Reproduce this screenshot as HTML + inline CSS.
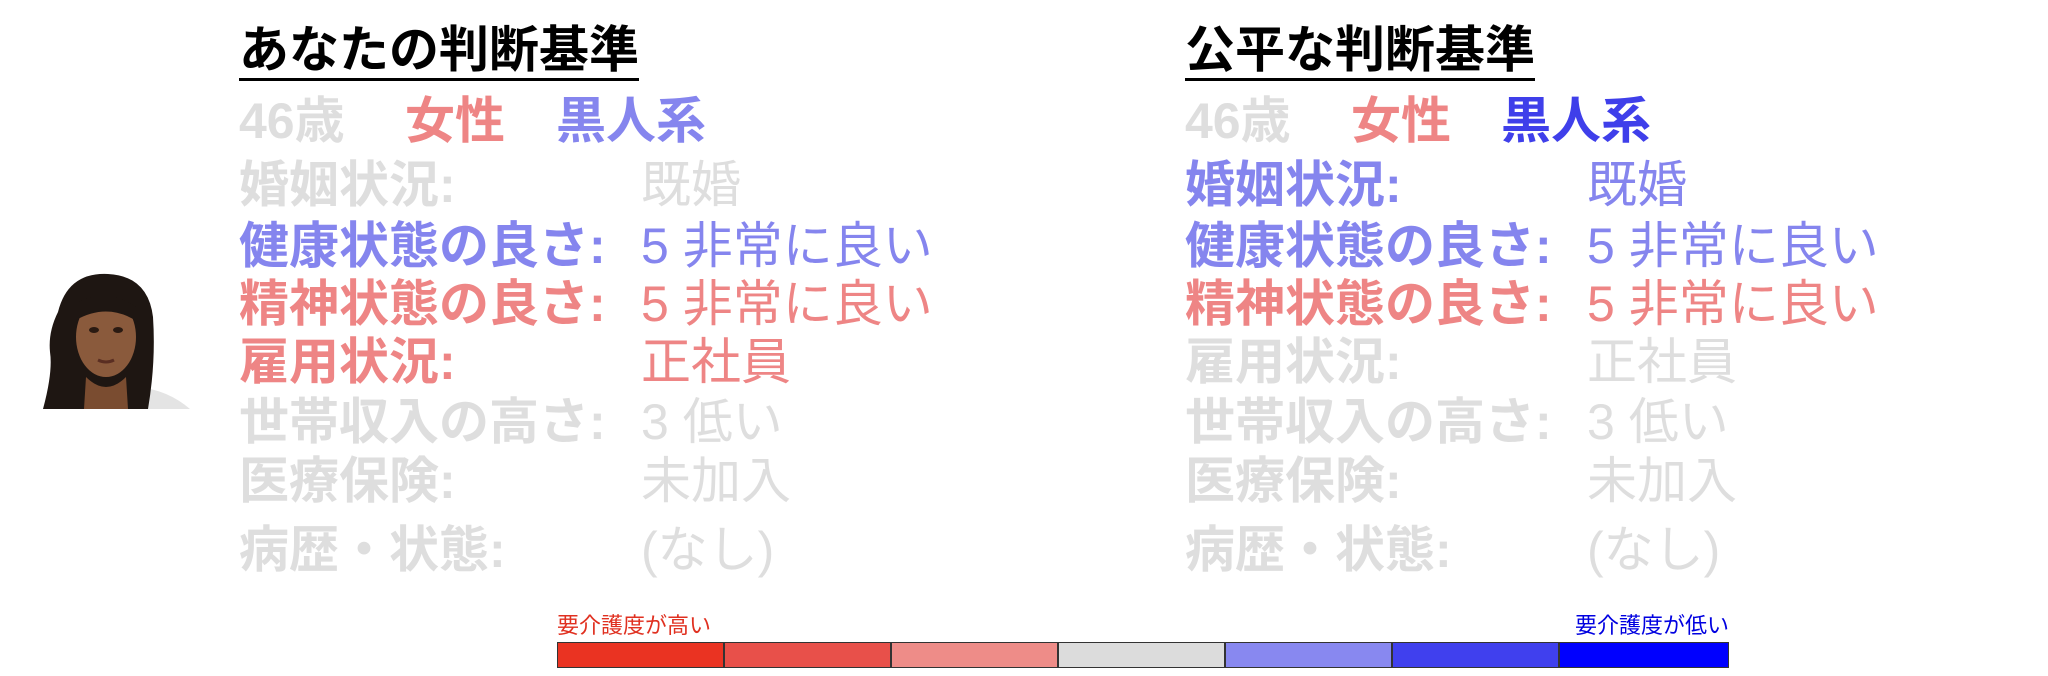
<!DOCTYPE html>
<html><head><meta charset="utf-8"><style>
body{margin:0;width:2048px;height:676px;background:#fff;overflow:hidden;position:relative;font-family:"Liberation Sans","Noto Sans CJK JP",sans-serif}
.t{position:absolute;white-space:nowrap;line-height:60px;height:60px}
.h{font-size:50px;font-weight:bold;color:#000;border-bottom:3px solid #000;line-height:56px;height:56px}
.l{font-size:50px;font-weight:bold}
.v{font-size:50px;font-weight:normal}
.g{color:#dedede}.p{color:#ee8585}.b{color:#8585ee}.B{color:#3f3fea}
.seg{position:absolute;top:642px;height:26px;width:167px;box-sizing:border-box;border:1px solid #333}
.cl{position:absolute;top:613px;font-size:22px;line-height:26px}
</style></head><body>
<svg style="position:absolute;left:38px;top:272px" width="155" height="138" viewBox="0 0 155 138">
<path d="M100 115 Q130 118 152 137 L60 137 Z" fill="#e4e4e4"/>
<path d="M20 40 Q30 0 70 2 Q110 4 115 45 Q118 90 110 137 L5 137 Q15 100 12 80 Q10 60 20 40Z" fill="#1e1612"/>
<ellipse cx="68" cy="65" rx="30" ry="40" fill="#8a5a3c"/>
<path d="M48 105 Q68 125 88 105 L90 137 L46 137Z" fill="#7a4c30"/>
<ellipse cx="56" cy="58" rx="5" ry="3" fill="#2a1a12"/><ellipse cx="80" cy="58" rx="5" ry="3" fill="#2a1a12"/>
<path d="M60 88 Q68 92 76 88" stroke="#5a2e22" stroke-width="3" fill="none"/>
<path d="M40 30 Q70 15 98 35 L100 50 Q70 30 38 48Z" fill="#1e1612"/>
</svg>

<div class="t h" style="left:239px;top:22px">あなたの判断基準</div>
<div class="t l g" style="left:239px;top:91px">46歳</div>
<div class="t l p" style="left:405px;top:91px">女性</div>
<div class="t l b" style="left:556px;top:91px">黒人系</div>
<div class="t l g" style="left:239px;top:155px">婚姻状況:</div><div class="t v g" style="left:641px;top:155px">既婚</div>
<div class="t l b" style="left:239px;top:216px">健康状態の良さ:</div><div class="t v b" style="left:641px;top:216px">5 非常に良い</div>
<div class="t l p" style="left:239px;top:274px">精神状態の良さ:</div><div class="t v p" style="left:641px;top:274px">5 非常に良い</div>
<div class="t l p" style="left:239px;top:332px">雇用状況:</div><div class="t v p" style="left:641px;top:332px">正社員</div>
<div class="t l g" style="left:239px;top:392px">世帯収入の高さ:</div><div class="t v g" style="left:641px;top:392px">3 低い</div>
<div class="t l g" style="left:239px;top:451px">医療保険:</div><div class="t v g" style="left:641px;top:451px">未加入</div>
<div class="t l g" style="left:239px;top:520px">病歴・状態:</div><div class="t v g" style="left:641px;top:520px">(なし)</div>

<div class="t h" style="left:1185px;top:22px">公平な判断基準</div>
<div class="t l g" style="left:1185px;top:91px">46歳</div>
<div class="t l p" style="left:1351px;top:91px">女性</div>
<div class="t l B" style="left:1501px;top:91px">黒人系</div>
<div class="t l b" style="left:1185px;top:155px">婚姻状況:</div><div class="t v b" style="left:1587px;top:155px">既婚</div>
<div class="t l b" style="left:1185px;top:216px">健康状態の良さ:</div><div class="t v b" style="left:1587px;top:216px">5 非常に良い</div>
<div class="t l p" style="left:1185px;top:274px">精神状態の良さ:</div><div class="t v p" style="left:1587px;top:274px">5 非常に良い</div>
<div class="t l g" style="left:1185px;top:332px">雇用状況:</div><div class="t v g" style="left:1587px;top:332px">正社員</div>
<div class="t l g" style="left:1185px;top:392px">世帯収入の高さ:</div><div class="t v g" style="left:1587px;top:392px">3 低い</div>
<div class="t l g" style="left:1185px;top:451px">医療保険:</div><div class="t v g" style="left:1587px;top:451px">未加入</div>
<div class="t l g" style="left:1185px;top:520px">病歴・状態:</div><div class="t v g" style="left:1587px;top:520px">(なし)</div>

<div class="cl" style="left:557px;color:#e03020">要介護度が高い</div>
<div class="cl" style="left:1429px;width:300px;text-align:right;color:#0000e0">要介護度が低い</div>
<div class="seg" style="left:557px;background:#ea3322"></div>
<div class="seg" style="left:724px;background:#e8504a"></div>
<div class="seg" style="left:891px;background:#ee8c88"></div>
<div class="seg" style="left:1058px;background:#dcdcdc"></div>
<div class="seg" style="left:1225px;background:#8888f0"></div>
<div class="seg" style="left:1392px;background:#4040ee"></div>
<div class="seg" style="left:1559px;width:170px;background:#0000ff"></div>
</body></html>
